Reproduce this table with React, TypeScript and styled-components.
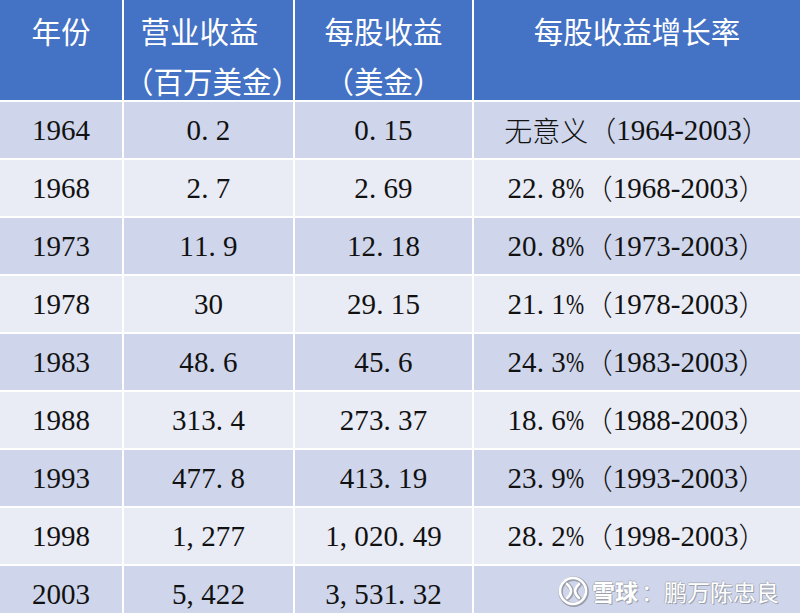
import React from 'react';
import styled, { createGlobalStyle } from 'styled-components';

const GlobalStyle = createGlobalStyle`
  html, body {
    margin: 0;
    padding: 0;
    background: #ffffff;
    overflow: hidden;
  }
`;

type Row = {
  year: string;
  revenue: string;
  eps: string;
  rate?: string;
  range?: string;
  note?: string;
};

const rows: Row[] = [
  { year: '1964', revenue: '0.2', eps: '0.15', note: '无意义', range: '1964-2003' },
  { year: '1968', revenue: '2.7', eps: '2.69', rate: '22.8%', range: '1968-2003' },
  { year: '1973', revenue: '11.9', eps: '12.18', rate: '20.8%', range: '1973-2003' },
  { year: '1978', revenue: '30', eps: '29.15', rate: '21.1%', range: '1978-2003' },
  { year: '1983', revenue: '48.6', eps: '45.6', rate: '24.3%', range: '1983-2003' },
  { year: '1988', revenue: '313.4', eps: '273.37', rate: '18.6%', range: '1988-2003' },
  { year: '1993', revenue: '477.8', eps: '413.19', rate: '23.9%', range: '1993-2003' },
  { year: '1998', revenue: '1,277', eps: '1,020.49', rate: '28.2%', range: '1998-2003' },
  { year: '2003', revenue: '5,422', eps: '3,531.32' },
];

// half-width cells like the SimSun digits of the original sheet
const Fixed: React.FC<{ text: string }> = ({ text }) => (
  <Mono>
    {text.split('').map((ch, i) =>
      ch === '%' ? <Percent key={i}>{ch}</Percent> : <Glyph key={i}>{ch}</Glyph>
    )}
  </Mono>
);

const Logo: React.FC = () => {
  const shapes = (
    <>
      <circle cx="16" cy="16" r="13" />
      <path d="M10 9 Q18 16 10 23" />
      <path d="M22 9 Q14 16 22 23" />
    </>
  );
  return (
    <svg width="32" height="32" viewBox="0 0 32 32">
      <g fill="none" stroke="#9a9fab" strokeWidth="4.4" strokeLinecap="round" transform="translate(0.7 0.7)">
        {shapes}
      </g>
      <g fill="none" stroke="#ffffff" strokeWidth="2.6" strokeLinecap="round">
        {shapes}
      </g>
    </svg>
  );
};

const App: React.FC = () => {
  return (
    <Page>
      <GlobalStyle />
      <Table>
        <HeadCell>年份</HeadCell>
        <HeadCell><Lead>营业收益</Lead><br />（百万美金）</HeadCell>
        <HeadCell>每股收益<br />（美金）</HeadCell>
        <HeadCell>每股收益增长率</HeadCell>
        {rows.map((r, i) => (
          <React.Fragment key={r.year}>
            <Cell $dark={i % 2 === 0}><Serif>{r.year}</Serif></Cell>
            <Cell $dark={i % 2 === 0}><Fixed text={r.revenue} /></Cell>
            <Cell $dark={i % 2 === 0}><Fixed text={r.eps} /></Cell>
            <Cell $dark={i % 2 === 0}>
              {r.note && <Cjk>{r.note}</Cjk>}
              {r.rate && <Fixed text={r.rate} />}
              {r.range && (
                <>
                  <Cjk>（</Cjk>
                  <Serif>{r.range}</Serif>
                  <Cjk>）</Cjk>
                </>
              )}
            </Cell>
          </React.Fragment>
        ))}
      </Table>
      <Watermark>
        <Logo />
        <Brand>雪球</Brand>
        <Author>：鹏万陈忠良</Author>
      </Watermark>
    </Page>
  );
};

const Page = styled.div`
  position: relative;
  width: 800px;
  height: 613px;
  overflow: hidden;
  background: #ffffff;
`;

const Table = styled.div`
  display: grid;
  grid-template-columns: 122px 169px 177px 1fr;
  grid-template-rows: 100px repeat(9, 56px);
  gap: 2px;
  background: #ffffff;
`;

const HeadCell = styled.div`
  background: #4472c4;
  color: #ffffff;
  font-family: "Noto Sans CJK SC", sans-serif;
  font-size: 29.5px;
  line-height: 50px;
  padding-top: 5px;
  text-align: center;
  white-space: nowrap;
`;

const Lead = styled.span`
  padding-right: 18px;
`;

const Cell = styled.div<{ $dark: boolean }>`
  display: flex;
  align-items: center;
  justify-content: center;
  background: ${p => (p.$dark ? '#cfd5ea' : '#e9ebf5')};
  color: #111111;
  white-space: nowrap;
`;

const Serif = styled.span`
  font-family: "Liberation Serif", "Times New Roman", serif;
  font-size: 29px;
`;

const Mono = styled.span`
  display: inline-flex;
  font-family: "Liberation Serif", "Times New Roman", serif;
  font-size: 29px;
`;

const Glyph = styled.span`
  display: inline-block;
  width: 14.6px;
  text-align: left;
`;

const Percent = styled.span`
  display: inline-block;
  width: 19px;
  transform: scaleX(0.75);
  transform-origin: left center;
`;

const Cjk = styled.span`
  font-family: "Noto Sans CJK SC", sans-serif;
  font-size: 28px;
  font-weight: 300;
`;

const Watermark = styled.div`
  position: absolute;
  left: 557px;
  top: 575px;
  display: flex;
  align-items: center;
  gap: 3px;
  font-family: "Noto Sans CJK SC", sans-serif;
  color: #ffffff;
  text-shadow: 1px 1px 0 #9a9fab, -1px 0 0 #b3b8c4, 0 -1px 0 #b3b8c4;
  line-height: 32px;
`;

const Brand = styled.span`
  font-size: 23px;
  font-weight: 700;
`;

const Author = styled.span`
  font-size: 23px;
  font-weight: 400;
`;

export default App;
